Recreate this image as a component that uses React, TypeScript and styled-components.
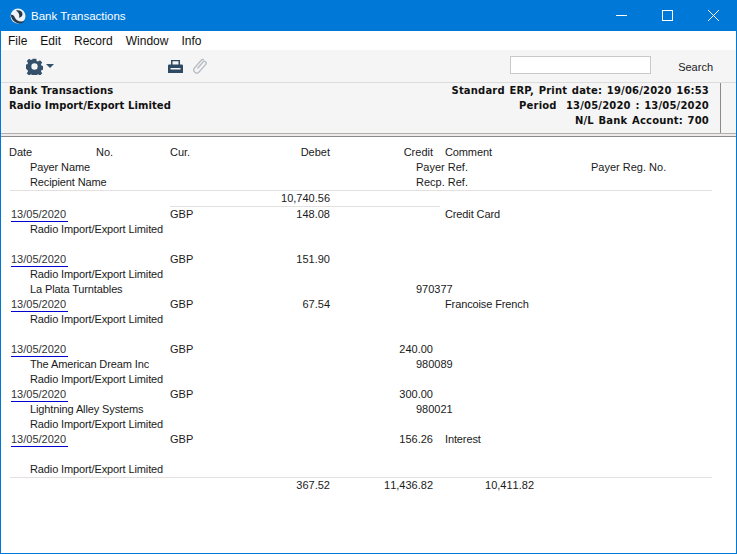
import React from "react";
import styled, { createGlobalStyle } from "styled-components";

const Global = createGlobalStyle`
  html, body { margin: 0; padding: 0; background: #fff; }
  body { font-family: "Liberation Sans", Arial, sans-serif; font-size: 11px; color: #111; }
`;

const Window = styled.div`
  width: 737px; height: 554px; box-sizing: border-box;
  border: 1px solid #0078d7; border-top: 0;
  display: flex; flex-direction: column; background: #fff; overflow: hidden;
`;
const TitleBar = styled.div`
  height: 31px; background: #0078d7; color: #fff; display: flex; align-items: center;
  padding-left: 9px; flex: none;
`;
const TitleText = styled.span` font-size: 11.5px; margin-left: 5px; flex: 1; `;
const WinControls = styled.div` display: flex; height: 31px; `;
const WinButton = styled.div`
  width: 46px; display: flex; align-items: center; justify-content: center;
`;
const MenuBar = styled.div`
  height: 19px; flex: none; display: flex; align-items: center; gap: 13px; padding-left: 7px;
  font-size: 12px; color: #111; background: #fff;
`;
const Toolbar = styled.div`
  height: 32px; flex: none; background: #f5f5f5; border-bottom: 1px solid #dcdcdc;
  display: flex; align-items: center; padding-left: 25px;
`;
const GearGroup = styled.div` display: flex; align-items: center; gap: 3px; width: 142px; `;
const IconGroup = styled.div` display: flex; align-items: center; gap: 10px; flex: 1; `;
const SearchInput = styled.div`
  width: 139px; height: 16px; background: #fff; border: 1px solid #c9c9c9; margin: 0 27px 2px 0;
`;
const SearchLabel = styled.span` font-size: 11px; color: #222; margin: 1px 23px 0 0; flex: none; `;
const HeaderFill = styled.div` background: #f5f5f5; height: 50px; flex: none; `;
const Header = styled.div`
  height: 50px; box-sizing: border-box; display: flex;
  justify-content: space-between; padding: 0 11px 0 8px; margin-right: 15px;
  border-right: 1px solid #8a8a8a;
  font-family: "DejaVu Sans", sans-serif; font-weight: 700; font-size: 10px; line-height: 15px; color: #111;
`;
const HeaderCol = styled.div<{ $right?: boolean }>`
  text-align: ${p => (p.$right ? "right" : "left")};
  white-space: pre;
  letter-spacing: ${p => (p.$right ? "0.18px" : "0.08px")};
  word-spacing: ${p => (p.$right ? "1px" : "0")};
`;
const DoubleRule = styled.div`
  flex: none; height: 4px; box-sizing: border-box;
  border-top: 1px solid #b5aeaa; border-bottom: 1px solid #8a8a8a; background: #eceaea;
`;
const Report = styled.div`
  flex: 1; padding: 8px 24px 0 8px; font-size: 11px; line-height: 15px; color: #1a1a1a;
`;
const MainRow = styled.div`
  display: grid; grid-template-columns: 87px 74px 30px 130px 103px 1fr; height: 15px; white-space: nowrap;
`;
const SubRow = styled.div`
  display: grid; grid-template-columns: 386px 175px 1fr; height: 15px; padding-left: 21px; white-space: nowrap;
`;
const NameCell = styled.span` letter-spacing: -0.12px; `;
const BlankRow = styled.div` height: 15px; `;
const Rule = styled.div<{ $left?: number; $width?: string }>`
  height: 1px; background: #e4e0e0; margin-left: ${p => p.$left ?? 1}px; width: ${p => p.$width ?? "auto"};
`;
const Amount = styled.span` text-align: right; font-kerning: none; `;
const Comment = styled.span` padding-left: 12px; letter-spacing: -0.12px; `;
const DateLink = styled.span`
  display: inline-block; width: 57px; margin-left: 2px; height: 14px; line-height: 15px;
  border-bottom: 1px solid #0000d0; color: #333;
`;
const TotalsRow = styled.div`
  display: grid; grid-template-columns: 321px 103px 101px; height: 15px;
`;
const AmountRow = styled.div`
  display: grid; grid-template-columns: 321px; height: 15px;
`;

const Gear = () => (
  <svg width="17" height="17" viewBox="0 0 24 24" fill="#34506b">
    <path fillRule="evenodd" d="M9.500 1h5l.6 3.100 2 .8 2.600-1.800 3.200 3.200-1.800 2.600.8 2 3.100.6v5l-3.100.6-.8 2 1.800 2.600-3.200 3.200-2.600-1.800-2 .8-.6 3.100h-5l-.6-3.100-2-.8-2.600 1.800-3.200-3.200 1.800-2.600-.8-2L-1 14.500v-5l3.100-.6.8-2L1.100 4.300 4.300 1.100l2.600 1.800 2-.8zM12 7.500a4.500 4.500 0 1 0 0 9 4.500 4.500 0 0 0 0-9z" />
  </svg>
);
const Caret = () => (
  <svg width="8" height="4" viewBox="0 0 8 4" fill="#34506b"><path d="M0 0h8L4 4z" /></svg>
);
const Printer = () => (
  <svg width="15" height="13" viewBox="0 0 15 13" fill="#2f4a63">
    <path fillRule="evenodd" d="M3 0h9v4.500h-1.500V1.300h-6v3.200H3zM1.200 4.500h12.600A1.200 1.200 0 0 1 15 5.700V13H0V5.700a1.200 1.200 0 0 1 1.200-1.200zM2.500 8v1.500h10V8z" />
  </svg>
);
const Clip = () => (
  <svg width="14" height="16" viewBox="0 0 14 16" fill="none" stroke="#b8bfc6" strokeWidth="1.400">
    <path d="M4.500 10.500 10 4a1.800 1.800 0 0 1 2.700 2.400L6 14a3 3 0 0 1-4.500-4L8 2.500a2.500 2.500 0 0 1 3-.8" />
  </svg>
);
const Logo = () => (
  <svg width="16" height="16" viewBox="0 0 16 16">
    <circle cx="8" cy="8" r="7.500" fill="#eef1f5" />
    <path d="M.8 7c.5 5 5 9 9.500 8.500 2-.3 3.500-1.500 4.500-3-3 1.500-8 1.500-10-3-.5-1.500-2-3.500-4-2.500z" fill="#25384c" />
    <path d="M6 2.500c3.500-.8 6.500 1 6.500 3.500 0 2-1.500 3.500-3.500 3.800 1-2.800-.3-5.500-3-7.300z" fill="#25384c" />
  </svg>
);

type Main = { kind: "main"; cur: string; debet?: string; credit?: string; comment?: string };
type Sub = { kind: "sub"; name: string; ref?: string };
type Blank = { kind: "blank" };
const rows: (Main | Sub | Blank)[] = [
  { kind: "main", cur: "GBP", debet: "148.08", comment: "Credit Card" },
  { kind: "sub", name: "Radio Import/Export Limited" },
  { kind: "blank" },
  { kind: "main", cur: "GBP", debet: "151.90" },
  { kind: "sub", name: "Radio Import/Export Limited" },
  { kind: "sub", name: "La Plata Turntables", ref: "970377" },
  { kind: "main", cur: "GBP", debet: "67.54", comment: "Francoise French" },
  { kind: "sub", name: "Radio Import/Export Limited" },
  { kind: "blank" },
  { kind: "main", cur: "GBP", credit: "240.00" },
  { kind: "sub", name: "The American Dream Inc", ref: "980089" },
  { kind: "sub", name: "Radio Import/Export Limited" },
  { kind: "main", cur: "GBP", credit: "300.00" },
  { kind: "sub", name: "Lightning Alley Systems", ref: "980021" },
  { kind: "sub", name: "Radio Import/Export Limited" },
  { kind: "main", cur: "GBP", credit: "156.26", comment: "Interest" },
  { kind: "blank" },
  { kind: "sub", name: "Radio Import/Export Limited" },
];

export default function App() {
  return (
    <Window>
      <Global />
      <TitleBar>
        <Logo />
        <TitleText>Bank Transactions</TitleText>
        <WinControls>
          <WinButton>
            <svg width="11" height="11" viewBox="0 0 11 11"><path d="M0 5.500h11" stroke="#fff" /></svg>
          </WinButton>
          <WinButton>
            <svg width="11" height="11" viewBox="0 0 11 11"><rect x=".5" y=".5" width="10" height="10" fill="none" stroke="#fff" /></svg>
          </WinButton>
          <WinButton>
            <svg width="11" height="11" viewBox="0 0 11 11"><path d="M0 0l11 11M11 0L0 11" stroke="#fff" /></svg>
          </WinButton>
        </WinControls>
      </TitleBar>
      <MenuBar>
        <span>File</span><span>Edit</span><span>Record</span><span>Window</span><span>Info</span>
      </MenuBar>
      <Toolbar>
        <GearGroup><Gear /><Caret /></GearGroup>
        <IconGroup><Printer /><Clip /></IconGroup>
        <SearchInput />
        <SearchLabel>Search</SearchLabel>
      </Toolbar>
      <HeaderFill>
        <Header>
          <HeaderCol>
            <div>Bank Transactions</div>
            <div>Radio Import/Export Limited</div>
          </HeaderCol>
          <HeaderCol $right>
            <div>Standard ERP, Print date: 19/06/2020 16:53</div>
            <div>Period  13/05/2020 : 13/05/2020</div>
            <div>N/L Bank Account: 700</div>
          </HeaderCol>
        </Header>
      </HeaderFill>
      <DoubleRule />
      <Report>
        <MainRow>
          <span>Date</span><span>No.</span><span>Cur.</span>
          <Amount>Debet</Amount>
          <Amount>Credit</Amount>
          <Comment>Comment</Comment>
        </MainRow>
        <SubRow><NameCell>Payer Name</NameCell><span>Payer Ref.</span><span>Payer Reg. No.</span></SubRow>
        <SubRow><NameCell>Recipient Name</NameCell><span>Recp. Ref.</span></SubRow>
        <Rule />
        <AmountRow><Amount>10,740.56</Amount></AmountRow>
        <Rule $left={161} $width="270px" />
        {rows.map((r, i) => {
          if (r.kind === "blank") return <BlankRow key={i} />;
          if (r.kind === "sub")
            return <SubRow key={i}><NameCell>{r.name}</NameCell><span>{r.ref}</span></SubRow>;
          return (
            <MainRow key={i}>
              <span><DateLink>13/05/2020</DateLink></span>
              <span />
              <span>{r.cur}</span>
              <Amount>{r.debet}</Amount>
              <Amount>{r.credit}</Amount>
              <Comment>{r.comment}</Comment>
            </MainRow>
          );
        })}
        <Rule />
        <TotalsRow>
          <Amount>367.52</Amount><Amount>11,436.82</Amount><Amount>10,411.82</Amount>
        </TotalsRow>
      </Report>
    </Window>
  );
}
